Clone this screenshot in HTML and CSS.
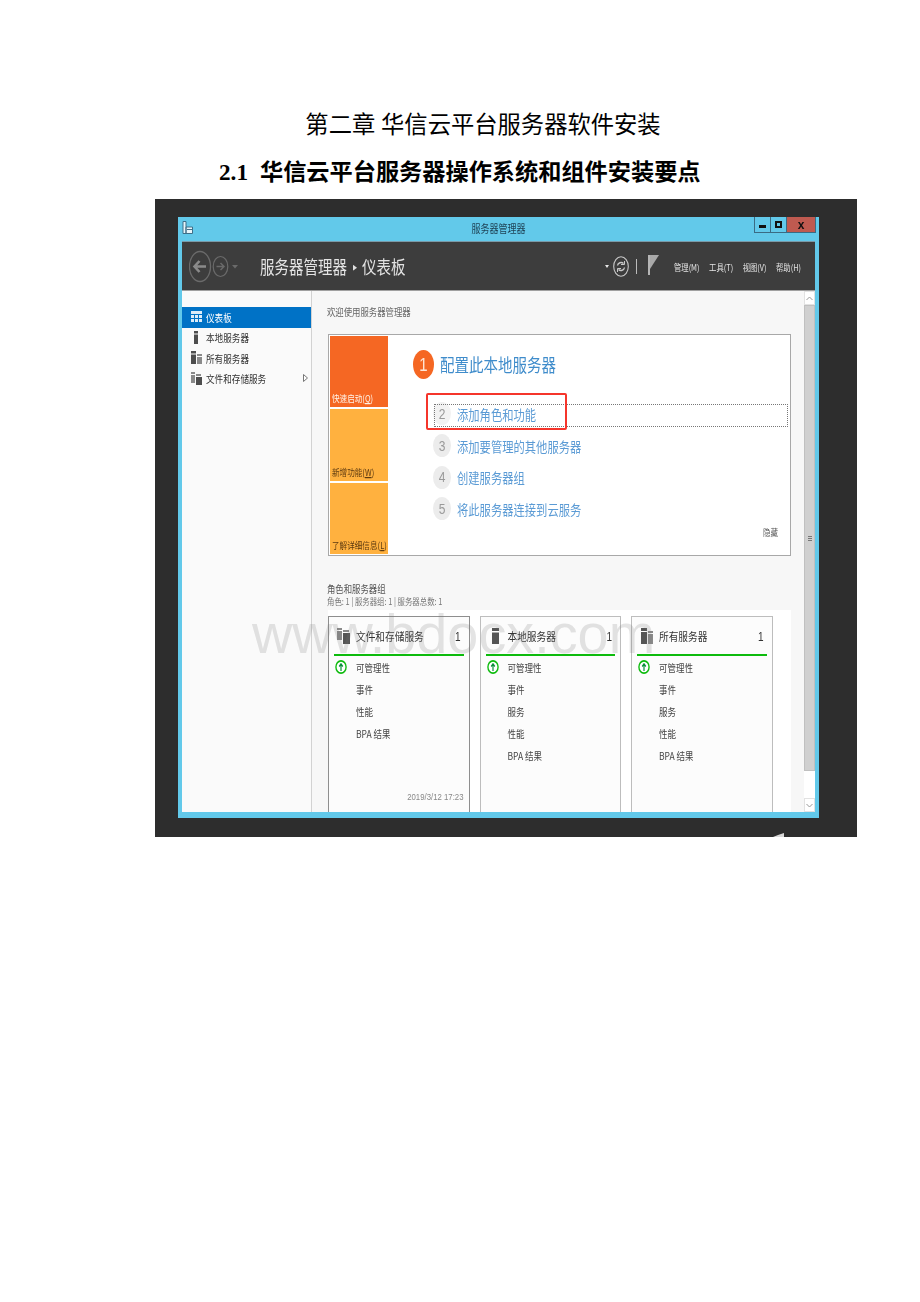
FILE: index.html
```html
<!DOCTYPE html>
<html lang="zh-CN">
<head>
  <meta charset="UTF-8">
  <title>第二章 华信云平台服务器软件安装</title>
  <link rel="stylesheet" href="styles.css">
</head>
<body>
<div class="page">
  <h1>第二章 华信云平台服务器软件安装</h1>
  <h2><span class="num">2.1</span>华信云平台服务器操作系统和组件安装要点</h2>

  <div class="shot">
    <div class="window">
      <!-- 标题栏 -->
      <div class="titlebar">
        <svg class="app-icon" width="11" height="13" viewBox="0 0 11 13"><path d="M1 .5h3v12H1zM4 6h6.500v6.500H4z" fill="#e8f6fb" stroke="#3f6f88"/><path d="M5 8h5v1H5z" fill="#3f6f88"/></svg>
        <span class="title">服务器管理器</span>
        <div class="controls">
          <span class="ctl"><i class="min"></i></span>
          <span class="ctl"><i class="max"></i></span>
          <span class="ctl close">x</span>
        </div>
      </div>

      <!-- 工具栏 -->
      <div class="toolbar">
        <svg class="nav" width="50" height="33" viewBox="0 0 50 33" fill="none" stroke="#6a6a6a">
          <ellipse cx="11" cy="16.500" rx="10.500" ry="15" stroke-width="1.300"/>
          <path d="M17 16.500H6M10.500 11 5.500 16.500l5 5.500" stroke="#8a8a8a" stroke-width="2.600"/>
          <ellipse cx="31.500" cy="16.500" rx="7.300" ry="10" stroke-width="1.200"/>
          <path d="M27.500 16.500h7M31.500 13l3.500 3.500-3.500 3.500" stroke-width="1.500"/>
          <path d="M43 15h6l-3 3.500z" fill="#6a6a6a" stroke="none"/>
        </svg>
        <div class="crumb">服务器管理器<svg class="sep" width="4" height="5" viewBox="0 0 4 5"><path d="M0 0l4 2.500-4 2.500z" fill="#e0e0e0"/></svg>仪表板</div>
        <div class="tools">
          <svg width="4" height="3" viewBox="0 0 4 3"><path d="M0 0h4L2 3z" fill="#e8e8e8"/></svg>
          <svg class="refresh" width="16" height="21" viewBox="0 0 16 21" fill="none" stroke="#c8c8c8"><ellipse cx="8" cy="10.500" rx="7.300" ry="9.800" stroke-width="1.100"/><path d="M4.500 9.500a3.600 3.600 0 0 1 6-2M11.500 11.500a3.600 3.600 0 0 1-6 2" stroke-width="1.400"/><path d="M11.500 5v3.500H8M4.500 16v-3.500H8" stroke-width="1"/></svg>
          <i class="bar"></i>
          <svg class="flag" width="11" height="20" viewBox="0 0 11 20"><path d="M0 0h2v20H0z" fill="#b5b5b5"/><path d="M2 0h9L2 14z" fill="#a8a8a8"/></svg>
          <div class="menu">
            <span>管理(M)</span>
            <span>工具(T)</span>
            <span>视图(V)</span>
            <span>帮助(H)</span>
          </div>
        </div>
      </div>

      <div class="body">
        <!-- 左侧导航 -->
        <div class="side">
          <a class="active">
            <svg width="11" height="11" viewBox="0 0 11 11"><path d="M0 0h11v3H0zM0 4h3v3H0zM4 4h3v3H4zM8 4h3v3H8zM0 8h3v3H0zM4 8h3v3H4zM8 8h3v3H8z" fill="#dcecf8"/></svg>
            <span class="t">仪表板</span>
          </a>
          <a>
            <svg width="11" height="13" viewBox="0 0 11 13"><path d="M3 0h4v2.500H3zM3 3.500h4V13H3z" fill="#4d4d4d"/></svg>
            <span class="t">本地服务器</span>
          </a>
          <a>
            <svg width="11" height="13" viewBox="0 0 11 13"><path d="M0 0h5v2.500H0zM0 3.500h5V13H0z" fill="#4d4d4d"/><path d="M6 3h5v2H6zM6 6h5v7H6z" fill="#8a8a8a"/></svg>
            <span class="t">所有服务器</span>
          </a>
          <a>
            <svg width="11" height="13" viewBox="0 0 11 13"><path d="M0 0h4v2H0zM0 3h4v8H0z" fill="#8a8a8a"/><path d="M5 2h5v2H5z" fill="#8a8a8a"/><path d="M5 5h6v8H5z" fill="#4d4d4d"/></svg>
            <span class="t">文件和存储服务</span>
            <svg class="more" width="5" height="8" viewBox="0 0 5 8"><path d="M.5.500 4.500 4 .5 7.500z" fill="#fff" stroke="#777"/></svg>
          </a>
        </div>

        <!-- 主内容 -->
        <div class="main">
          <p class="welcome">欢迎使用服务器管理器</p>

          <div class="quick">
            <div class="tabs">
              <div class="tab first"><span class="t">快速启动(<u>Q</u>)</span></div>
              <div class="tab"><span class="t">新增功能(<u>W</u>)</span></div>
              <div class="tab"><span class="t">了解详细信息(<u>L</u>)</span></div>
            </div>
            <div class="steps">
              <div class="head"><span class="big"><span class="t">1</span></span><span class="t">配置此本地服务器</span></div>
              <div class="step on"><span class="dot"><span class="t">2</span></span><span class="t">添加角色和功能</span></div>
              <div class="step"><span class="dot"><span class="t">3</span></span><span class="t">添加要管理的其他服务器</span></div>
              <div class="step"><span class="dot"><span class="t">4</span></span><span class="t">创建服务器组</span></div>
              <div class="step"><span class="dot"><span class="t">5</span></span><span class="t">将此服务器连接到云服务</span></div>
              <div class="hide">隐藏</div>
            </div>
            <div class="redbox"></div>
          </div>

          <div class="group-title">角色和服务器组</div>
          <div class="group-sub">角色: 1 | 服务器组: 1 | 服务器总数: 1</div>

          <div class="cards">
            <div class="card">
              <div class="card-head">
                <svg width="13" height="16" viewBox="0 0 13 16"><path d="M0 0h5v2H0zM0 3h5v9H0zM6 2h6v2H6z" fill="#8a8a8a"/><path d="M6 5h7v11H6z" fill="#555"/></svg>
                <span class="name t">文件和存储服务</span><span class="count t">1</span>
              </div>
              <div class="row"><svg class="up" width="12" height="12" viewBox="0 0 13 13"><circle cx="6.500" cy="6.500" r="5.500" fill="#fff" stroke="#0dbb0d" stroke-width="1.500"/><path d="M6.500 10V4.500M4.500 6l2-2.200 2 2.200" fill="none" stroke="#0a8f3a" stroke-width="1.300"/></svg>可管理性</div>
              <div class="row">事件</div>
              <div class="row">性能</div>
              <div class="row">BPA 结果</div>
              <div class="date">2019/3/12 17:23</div>
            </div>
            <div class="card">
              <div class="card-head">
                <svg width="13" height="16" viewBox="0 0 13 16"><path d="M3 0h7v3H3zM3 4.500h7V16H3z" fill="#555"/></svg>
                <span class="name t">本地服务器</span><span class="count t">1</span>
              </div>
              <div class="row"><svg class="up" width="12" height="12" viewBox="0 0 13 13"><circle cx="6.500" cy="6.500" r="5.500" fill="#fff" stroke="#0dbb0d" stroke-width="1.500"/><path d="M6.500 10V4.500M4.500 6l2-2.200 2 2.200" fill="none" stroke="#0a8f3a" stroke-width="1.300"/></svg>可管理性</div>
              <div class="row">事件</div>
              <div class="row">服务</div>
              <div class="row">性能</div>
              <div class="row">BPA 结果</div>
            </div>
            <div class="card">
              <div class="card-head">
                <svg width="13" height="16" viewBox="0 0 13 16"><path d="M1 0h6v3H1zM1 4h6v12H1z" fill="#555"/><path d="M8 3h5v2H8zM8 6h5v10H8z" fill="#8a8a8a"/></svg>
                <span class="name t">所有服务器</span><span class="count t">1</span>
              </div>
              <div class="row"><svg class="up" width="12" height="12" viewBox="0 0 13 13"><circle cx="6.500" cy="6.500" r="5.500" fill="#fff" stroke="#0dbb0d" stroke-width="1.500"/><path d="M6.500 10V4.500M4.500 6l2-2.200 2 2.200" fill="none" stroke="#0a8f3a" stroke-width="1.300"/></svg>可管理性</div>
              <div class="row">事件</div>
              <div class="row">服务</div>
              <div class="row">性能</div>
              <div class="row">BPA 结果</div>
            </div>
          </div>
        </div>

        <!-- 滚动条 -->
        <div class="scroll">
          <span class="arrow">
            <svg width="7" height="5" viewBox="0 0 7 5"><path d="M.5 4 3.500 1l3 3" fill="none" stroke="#999"/></svg>
          </span>
          <div class="thumb"><i></i></div>
          <div class="rest"></div>
          <span class="arrow">
            <svg width="7" height="5" viewBox="0 0 7 5"><path d="M.5 1l3 3 3-3" fill="none" stroke="#999"/></svg>
          </span>
        </div>
      </div>
    </div>
    <svg class="mark" width="11" height="4" viewBox="0 0 11 4"><path d="M0 4 5 2l6-2v4z" fill="#d8d8d8"/></svg>
    <div class="watermark">www.bdocx.com</div>
  </div>
</div>
</body>
</html>
```

FILE: styles.css
```css
* {
  margin: 0;
  padding: 0;
  box-sizing: border-box;
}

html, body {
  background-color: #fff;
}

.page {
  width: 920px;
  height: 1302px;
  padding-top: 110px;
  font-family: "Noto Sans CJK SC", "Liberation Sans", sans-serif;
  overflow: hidden;
}

h1 {
  height: 30px;
  padding-left: 46px;
  font-family: "Liberation Serif", "Noto Sans CJK SC", serif;
  font-size: 23.300px;
  line-height: 30px;
  font-weight: 400;
  text-align: center;
  color: #000;
}

h2 {
  height: 38px;
  margin-top: 13px;
  padding-left: 219px;
  font-family: "Liberation Serif", "Noto Sans CJK SC", serif;
  font-size: 23.200px;
  line-height: 38px;
  font-weight: 700;
  color: #000;
}

h2 .num {
  display: inline-block;
  width: 41px;
}

/* 截图被纵向拉伸过，文字也跟着拉高 */
.t {
  display: inline-block;
  transform: scaleY(1.22);
}

.shot {
  position: relative;
  width: 702px;
  height: 638px;
  margin-left: 155px;
  margin-top: 8px;
  padding: 18px 38px 19px 23px;
  background-color: #2d2d2d;
}

.window {
  width: 641px;
  height: 601px;
  padding: 0 4px 6px;
  background-color: #62c9ea;
  display: flex;
  flex-direction: column;
  filter: blur(.3px);
}

.titlebar {
  height: 24px;
  display: flex;
  align-items: center;
  justify-content: center;
  position: relative;
  font-size: 9px;
  color: #1d3f52;
}

.title {
  transform: translateY(-1px) scaleY(1.22);
}

.app-icon {
  position: absolute;
  left: 0;
  top: 4px;
}

.controls {
  position: absolute;
  right: -1px;
  top: 0;
  display: flex;
  height: 16px;
  border: 1px solid #3a6b84;
  border-top: 0;
}

.ctl {
  width: 16px;
  display: flex;
  align-items: center;
  justify-content: center;
  border-right: 1px solid #3a6b84;
}

.ctl.close {
  width: 28px;
  border: 0;
  background-color: #bf5a50;
  font: 700 12px "Liberation Sans", sans-serif;
  color: #111;
}

.ctl .min {
  width: 7px;
  height: 3px;
  margin-top: 3px;
  background-color: #111;
}

.ctl .max {
  width: 7px;
  height: 7px;
  border: 2px solid #111;
}

.toolbar {
  height: 50px;
  padding-left: 7px;
  display: flex;
  align-items: center;
  background-color: #3d3d3d;
  border-top: 1px solid #7a9aa8;
  border-bottom: 1px solid #a0a0a0;
}

.crumb {
  margin-left: 21px;
  font-size: 14.500px;
  color: #e4e4e4;
  display: flex;
  align-items: center;
  transform: scaleY(1.22);
}

.sep {
  margin: 1px 5px 0 6px;
}

.tools {
  margin-left: auto;
  padding-right: 14px;
  display: flex;
  align-items: center;
}

.refresh {
  margin-left: 4px;
}

.bar {
  width: 1px;
  height: 15px;
  margin-left: 7px;
  background-color: #bbb;
}

.flag {
  margin-left: 11px;
  margin-top: -3px;
}

.menu {
  margin-left: 15px;
  display: flex;
  gap: 9.500px;
  font-size: 7.350px;
  color: #e4e4e4;
  transform: scaleY(1.22);
}

.body {
  flex: 1;
  min-height: 0;
  display: flex;
}

.side {
  width: 130px;
  padding-top: 16px;
  background-color: #fafafa;
  border-right: 1px solid #d2d2d2;
}

.side a {
  height: 20.500px;
  padding: 0 0 2px 9px;
  display: flex;
  align-items: center;
  gap: 4px;
  font-size: 8.600px;
  color: #333;
}

.side a.active {
  height: 21px;
  background-color: #0072c6;
  color: #fff;
}

.side .more {
  margin-left: auto;
  margin-right: 3px;
}

.main {
  width: 492px;
  padding: 13px 0 0 15px;
  background-color: #f7f7f7;
  position: relative;
  overflow: hidden;
}

.welcome {
  height: 15px;
  font-size: 8.400px;
  line-height: 15px;
  color: #666;
  transform: scaleY(1.22);
}

.quick {
  position: relative;
  width: 463px;
  height: 222px;
  margin: 15px 0 0 1px;
  padding: 1px;
  background-color: #fff;
  border: 1px solid #a8a8a8;
  display: flex;
}

.tabs {
  width: 58px;
  display: flex;
  flex-direction: column;
  gap: 2px;
}

.tab {
  flex: 1;
  padding: 0 0 4px 2px;
  display: flex;
  align-items: flex-end;
  background-color: #ffb13f;
  font-size: 7.600px;
  white-space: nowrap;
  color: #5d3a10;
}

.tab.first {
  background-color: #f56723;
  color: #fff3e8;
}

.steps {
  flex: 1;
  padding: 14px 0 0 25px;
  position: relative;
}

.head {
  height: 29px;
  display: flex;
  align-items: center;
  gap: 6px;
  font-size: 14.500px;
  color: #3f8ccb;
}

.big {
  width: 21px;
  height: 29px;
  border-radius: 50%;
  display: flex;
  align-items: center;
  justify-content: center;
  background-color: #f56723;
  font: 15px "Liberation Sans", sans-serif;
  color: #ffe6d6;
}

.step {
  height: 31.700px;
  margin-left: 20px;
  display: flex;
  align-items: center;
  gap: 6px;
  font-size: 11.300px;
  color: #5b9bd5;
}

.head + .step {
  margin-top: 19px;
}

.dot {
  width: 18px;
  height: 23px;
  border-radius: 50%;
  display: flex;
  align-items: center;
  justify-content: center;
  background-color: #ececec;
  font: 12px "Liberation Sans", sans-serif;
  color: #999;
}

.step.on {
  position: relative;
}

.step.on .dot {
  background-color: #f2f2f2;
}

.step.on::after {
  content: "";
  position: absolute;
  left: 1px;
  right: 1px;
  top: 6px;
  height: 21px;
  border: 1px dotted #777;
}

.hide {
  position: absolute;
  right: 11px;
  bottom: 17px;
  font-size: 7.500px;
  color: #555;
  transform: scaleY(1.22);
}

.redbox {
  position: absolute;
  left: 97px;
  top: 58px;
  width: 141px;
  height: 37px;
  border: 2px solid #f5352b;
  border-radius: 2px;
}

.group-title {
  margin-top: 26px;
  font-size: 8.400px;
  line-height: 12px;
  color: #555;
  transform: scaleY(1.22);
}

.group-sub {
  font-size: 7.400px;
  line-height: 13px;
  color: #777;
  transform: scaleY(1.22);
}

.cards {
  width: 463px;
  height: 202px;
  margin: 3px 0 0 1px;
  padding-top: 6px;
  display: flex;
  gap: 10px;
  background-color: #fff;
}

.card {
  width: 141.500px;
  height: 196px;
  padding: 0 5px;
  background-color: #fcfcfc;
  border: 1px solid #bdbdbd;
  border-bottom: 0;
  position: relative;
  font-size: 8.500px;
  color: #444;
}

.card:nth-child(1) {
  border-color: #8e8e8e;
}

.card-head {
  height: 39px;
  border-bottom: 2px solid #0dbb0d;
  display: flex;
  align-items: center;
  padding: 1px 0 0 3px;
  font-size: 9.700px;
  color: #333;
}

.card-head .name {
  margin-left: 6px;
}

.card-head .count {
  margin-left: auto;
  margin-right: 3px;
  font: 10px "Liberation Sans", sans-serif;
  color: #333;
}

.row {
  height: 22px;
  padding-left: 22px;
  display: flex;
  align-items: center;
  position: relative;
  line-height: 1;
  transform: scaleY(1.22);
}

.up {
  position: absolute;
  left: 1px;
  top: 5px;
}

.date {
  position: absolute;
  right: 5px;
  bottom: 11px;
  font: 7.800px "Liberation Sans", sans-serif;
  color: #888;
  transform: scaleY(1.22);
}

.scroll {
  width: 11px;
  flex-shrink: 0;
  display: flex;
  flex-direction: column;
  background-color: #fff;
}

.arrow {
  height: 14px;
  display: flex;
  align-items: center;
  justify-content: center;
  background-color: #fff;
  border: 1px solid #e2e2e2;
}

.thumb {
  height: 466px;
  display: flex;
  align-items: center;
  justify-content: center;
  background-color: #d0d0d0;
  border: 1px solid #c0c0c0;
}

.thumb i {
  width: 4px;
  height: 5px;
  border-top: 1px solid #777;
  border-bottom: 1px solid #777;
  background: linear-gradient(#d0d0d0 40%, #777 40%, #777 60%, #d0d0d0 60%);
}

.rest {
  flex: 1;
}

.mark {
  position: absolute;
  left: 618px;
  bottom: 0;
}

.watermark {
  position: absolute;
  left: 97px;
  top: 405px;
  font: 55.800px/60px "Liberation Sans", sans-serif;
  color: rgba(120, 120, 120, .2);
  white-space: nowrap;
}
```
